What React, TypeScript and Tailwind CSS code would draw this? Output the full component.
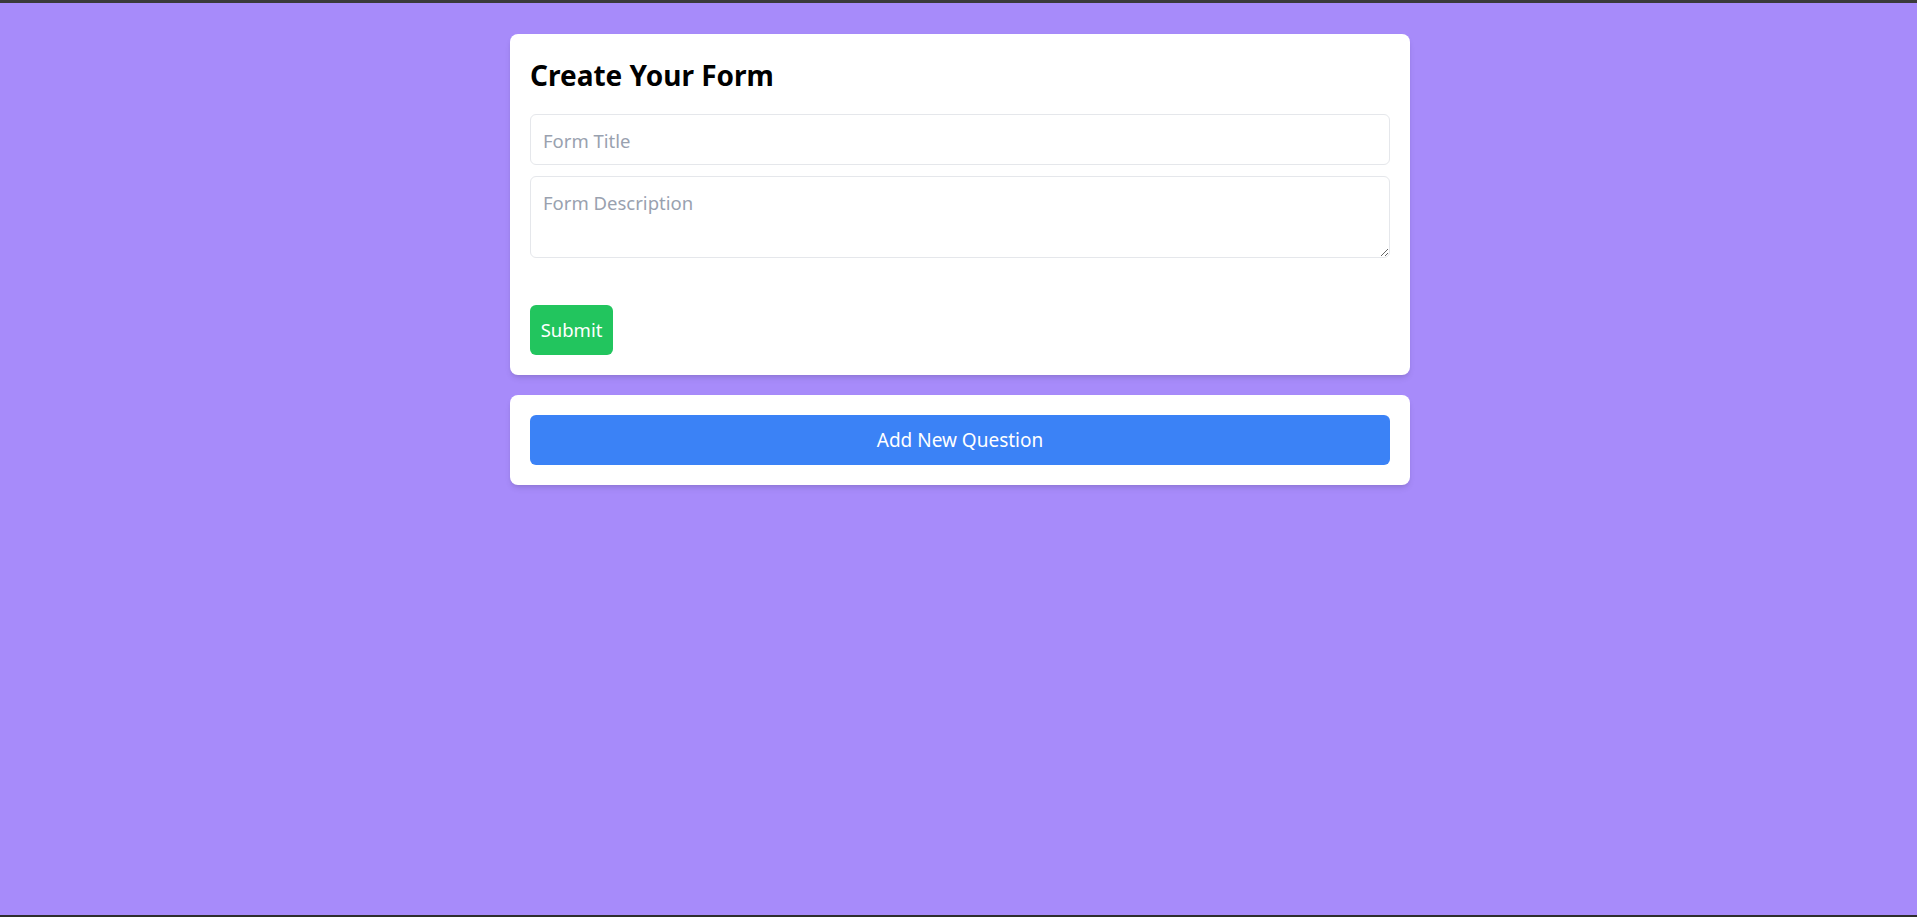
import React from "react";

const App = () => {
  return (
    <div
      className="min-h-[917px] bg-[#a78bfa] border-t-[3px] border-b-2 border-t-[#3a3a3a] border-b-[#2e2e2e] flex flex-col"
      style={{ fontFamily: '"Noto Sans", "Open Sans", sans-serif' }}
    >
      <div className="w-[900px] mx-auto pl-[3px] box-content pt-[31px] flex flex-col gap-5">
        {/* Form details card */}
        <div className="bg-white rounded-lg shadow-md p-5">
          <h1 className="text-[28px] leading-9 font-bold text-black pt-[3px] mb-[21px]">Create Your Form</h1>
          <input
            type="text"
            placeholder="Form Title"
            className="w-full h-[51px] px-3 pt-[2px] text-[18.5px] border border-gray-200 rounded-md placeholder:text-gray-400 outline-none"
          />
          <textarea
            placeholder="Form Description"
            className="w-full h-[82px] mt-[11px] px-3 pt-3 pb-2 text-[18.5px] border border-gray-200 rounded-md placeholder:text-gray-400 outline-none block"
          />
          <button className="mt-[47px] h-[50px] w-[83px] bg-[#22c55e] text-white text-[18.5px] rounded-md">
            Submit
          </button>
        </div>

        {/* Questions card */}
        <div className="bg-white rounded-lg shadow-md p-5">
          <button className="w-full h-[50px] bg-[#3b82f6] text-white text-[19px] rounded-md">
            Add New Question
          </button>
        </div>
      </div>
    </div>
  );
};

export default App;
